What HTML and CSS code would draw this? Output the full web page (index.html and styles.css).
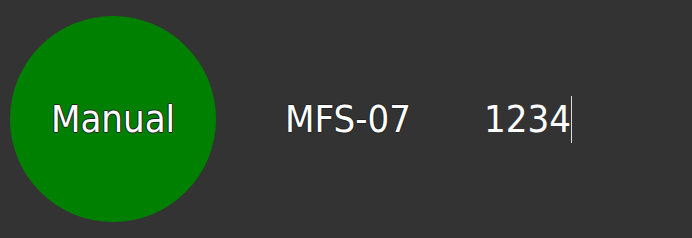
FILE: index.html
```html
<!DOCTYPE html>
<html lang="en">
  <head>
    <meta charset="UTF-8" />
    <meta name="viewport" content="width=device-width, initial-scale=1.0" />
    <title>Station</title>
    <link rel="stylesheet" href="styles.css">
  </head>
  <body>
    <div class="panel">
      <div class="mode">Manual</div>
      <div class="station">MFS-07</div>
      <div class="code-field"><span class="code">1234</span><span class="caret"></span></div>
    </div>
  </body>
</html>
```

FILE: styles.css
```css
body {
  margin: 0;
  background-color: #333333;
  font-family: "DejaVu Sans Condensed", "DejaVu Sans", sans-serif;
}
.panel {
  height: 238px;
  display: flex;
  align-items: center;
}
.mode {
  width: 206px;
  height: 206px;
  margin-left: 10px;
  border-radius: 50%;
  background-color: #008000;
  display: flex;
  justify-content: center;
  align-items: center;
  color: #ffffff;
  font-size: 38px;
  text-shadow: -1px 0 0 #222, 1px 0 0 #222, 0 -1px 0 #222, 0 1px 0 #222;
}
.station {
  margin-left: 69px;
  color: #ffffff;
  font-size: 38px;
  text-shadow: -1px 0 0 #222, 1px 0 0 #222, 0 -1px 0 #222, 0 1px 0 #222;
}
.code-field {
  margin-left: 73px;
  display: flex;
  align-items: center;
  color: #ffffff;
  font-size: 38px;
}
.caret {
  width: 1px;
  height: 47px;
  margin-left: 0;
  background-color: #dddddd;
}
```
